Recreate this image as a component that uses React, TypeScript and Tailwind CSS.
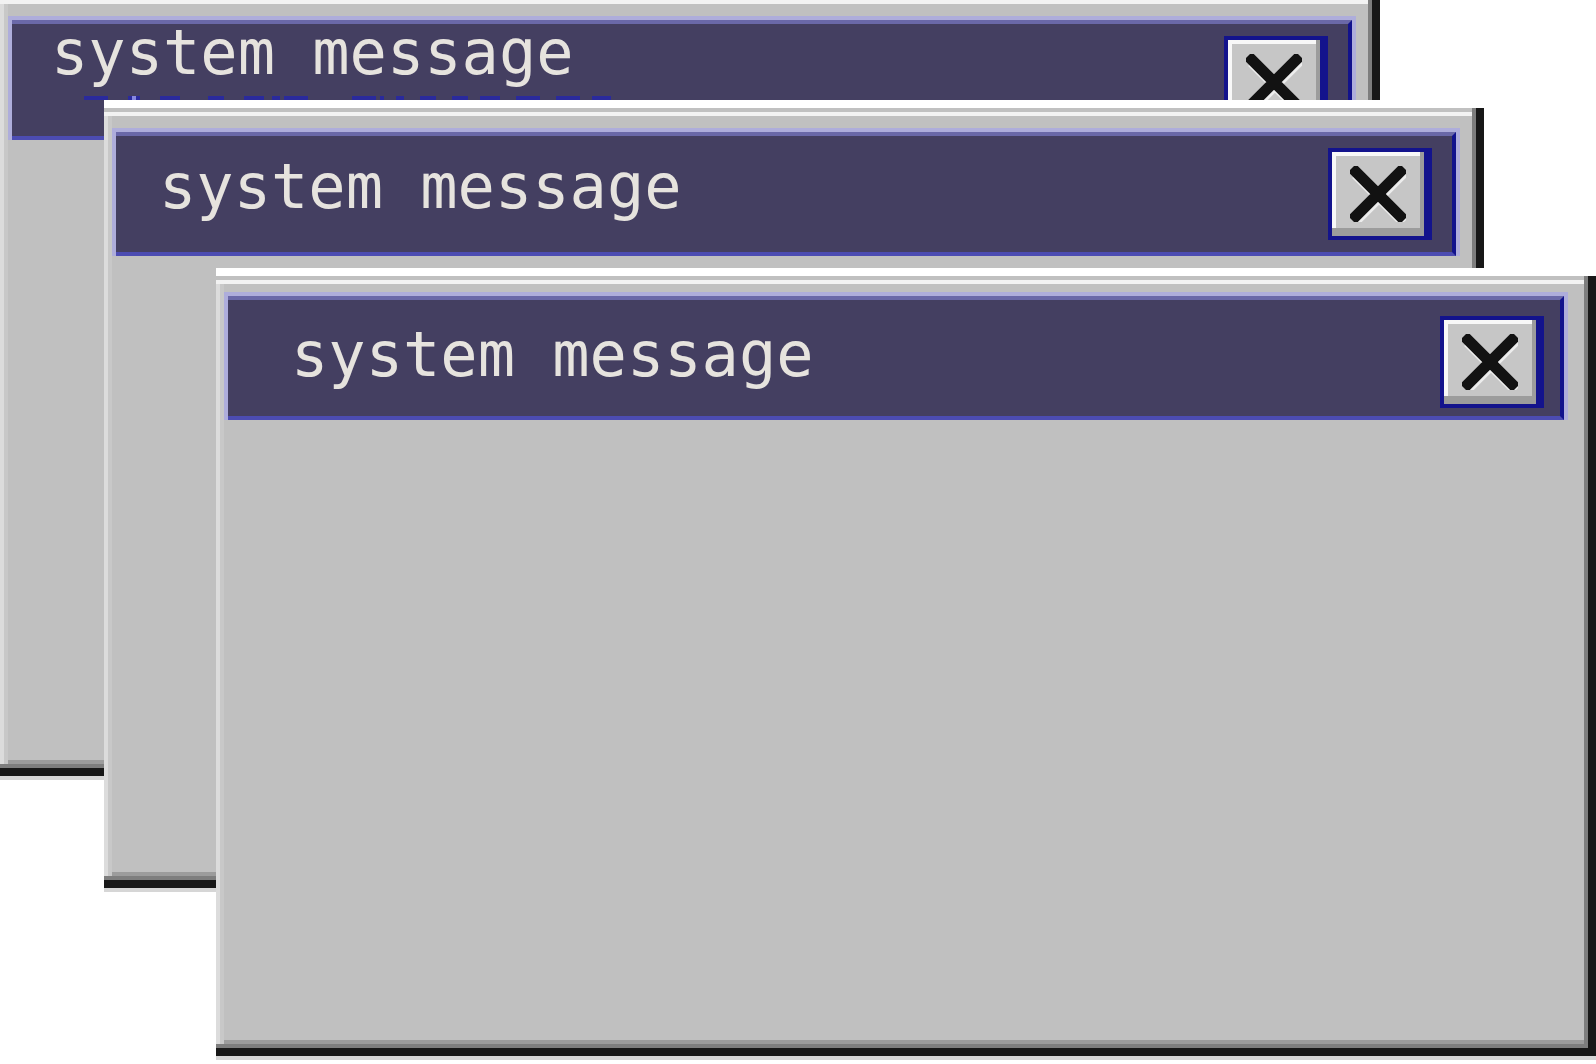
import React from "react";

interface WindowProps {
  pos: string;
  pad: string;
  barH: string;
  textPad: string;
  btnPad: string;
}

function CloseButton() {
  return (
    <div className="w-[104px] h-[92px] shrink-0 border-t-4 border-l-4 border-r-8 border-b-4 border-[#13138c]">
      <div className="h-full flex items-center justify-center bg-[#c6c6c6] shadow-[inset_-4px_-8px_0_#9c9c9c,inset_4px_4px_0_#f8f8f8]">
        <svg width="56" height="56" viewBox="0 0 56 56">
          <g strokeWidth="11">
            <path d="M6 8 L54 56 M54 6 L6 54" stroke="#ededed" />
            <path d="M2 2 L54 54 M54 2 L2 54" stroke="#121212" />
          </g>
        </svg>
      </div>
    </div>
  );
}

function SystemWindow({ pos, pad, barH, textPad, btnPad }: WindowProps) {
  return (
    <div
      className={`absolute ${pos} w-[1380px] h-[788px] bg-[#c0c0c0] pl-2 ${pad} shadow-[inset_0_8px_0_#ffffff,inset_-8px_-8px_0_#181818,inset_-12px_-12px_0_#7e7e7e,inset_0_12px_0_#c0c0c0,inset_0_16px_0_#f2f2f2,inset_4px_0_0_#dcdcdc,inset_8px_0_0_#c8c8c8,inset_0_-16px_0_#9c9c9c,0_4px_0_#d6d6d6]`}
    >
      {/* Title bar */}
      <div className="border-t-4 border-l-4 border-r-4 border-[#aeaddb]">
        <div
          className={`${barH} flex justify-between items-start bg-[#443f61] border-t-4 border-r-4 border-b-4 border-t-[#6a68a8] border-r-[#12128c] border-b-[#4c4cb2]`}
        >
          <span
            className={`${textPad} font-['DejaVu_Sans_Mono',monospace] text-[62px] leading-[62px] text-[#e6e3de] whitespace-nowrap`}
          >
            system message
          </span>
          <div className={btnPad}>
            <CloseButton />
          </div>
        </div>
      </div>
    </div>
  );
}

// leftover pixels peeking out under the first title bar
const dashes: [number, number][] = [
  [0, 24], [44, 56], [76, 96], [124, 140], [160, 180], [188, 196], [200, 224],
  [268, 292], [296, 300], [312, 320], [336, 352], [368, 384], [396, 416],
  [432, 456], [472, 496], [508, 527],
];

export default function App() {
  return (
    <div className="relative w-[1596px] h-[1064px] overflow-hidden bg-white">
      <SystemWindow
        pos="left-0 top-[-12px]"
        pad="pt-[28px] pr-6"
        barH="h-[120px]"
        textPad="pl-[39px] -mt-[2px]"
        btnPad="mt-3 mr-5"
      />
      <svg className="absolute left-[84px] top-[96px]" width="530" height="4">
        {dashes.map(([a, b], i) => (
          <rect key={i} x={a} y={0} width={b - a} height={4} fill="#2a2a9c" />
        ))}
        <rect x={48} y={0} width={4} height={4} fill="#8888e0" />
      </svg>
      <SystemWindow
        pos="left-[104px] top-[100px]"
        pad="pt-[28px] pr-6"
        barH="h-[124px]"
        textPad="pl-[43px] pt-[20px]"
        btnPad="mt-3 mr-5"
      />
      <SystemWindow
        pos="left-[216px] top-[268px]"
        pad="pt-6 pr-7"
        barH="h-[124px]"
        textPad="pl-[63px] pt-[24px]"
        btnPad="mt-4 mr-4"
      />
    </div>
  );
}
